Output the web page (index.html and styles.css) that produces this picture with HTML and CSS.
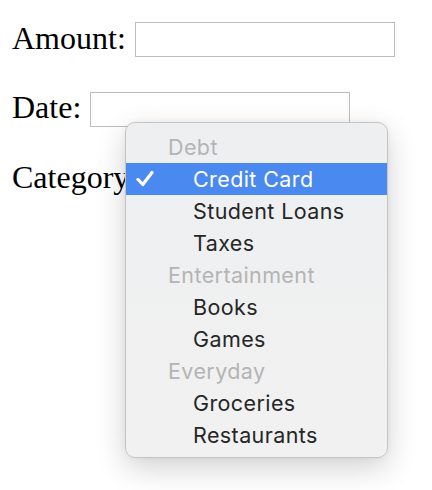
FILE: index.html
```html
<!DOCTYPE html>
<html>
<head>
<meta charset="utf-8">
<link rel="stylesheet" href="styles.css">
</head>
<body>
<div class="form">
  <div class="row">
    <span class="label">Amount:</span>
    <span class="field"></span>
  </div>
  <div class="row">
    <span class="label">Date:</span>
    <span class="field"></span>
  </div>
  <div class="row">
    <span class="label">Category:</span>
  </div>
</div>
<div class="menu">
  <div class="group">Debt</div>
  <div class="item selected">
    <svg class="check" viewBox="0 0 18 17" width="18" height="17"><path d="M2 9.5 L6.8 14.5 L16 2.5" fill="none" stroke="#fff" stroke-width="3.2" stroke-linecap="round" stroke-linejoin="round"/></svg>
    <span>Credit Card</span>
  </div>
  <div class="item"><span>Student Loans</span></div>
  <div class="item"><span>Taxes</span></div>
  <div class="group">Entertainment</div>
  <div class="item"><span>Books</span></div>
  <div class="item"><span>Games</span></div>
  <div class="group">Everyday</div>
  <div class="item"><span>Groceries</span></div>
  <div class="item"><span>Restaurants</span></div>
</div>
</body>
</html>
```
FILE: styles.css
```css
html, body {
  margin: 0;
  padding: 0;
  background: #ffffff;
}
body {
  width: 432px;
  height: 490px;
  overflow: hidden;
  position: relative;
  font-family: "Liberation Serif", "Times New Roman", serif;
  color: #000;
}
.form {
  padding: 22px 0 0 12px;
  display: flex;
  flex-direction: column;
  gap: 34.5px;
}
.row {
  display: flex;
  align-items: center;
  height: 35px;
  gap: 9px;
}
.label {
  font-size: 32px;
  line-height: 32px;
  margin-bottom: 4px;
  white-space: nowrap;
}
.field {
  display: block;
  width: 258px;
  height: 33px;
  border: 1px solid #bdbdbd;
  background: #fff;
}
.menu {
  position: absolute;
  left: 125px;
  top: 122px;
  width: 263px;
  height: 336px;
  box-sizing: border-box;
  padding: 8px 0;
  background: linear-gradient(#eeeff1, #f1f1f1);
  border: 1px solid #c4c4c4;
  border-radius: 10px;
  box-shadow: 0 10px 30px rgba(0,0,0,0.18), 0 0 6px rgba(0,0,0,0.05);
  font-family: Inter, "Noto Sans", sans-serif;
  font-size: 21.5px;
  letter-spacing: 0.4px;
  overflow: hidden;
}
.group, .item {
  height: 32px;
  display: flex;
  align-items: center;
  white-space: nowrap;
}
.group {
  padding-left: 42px;
  color: #b4b4b4;
}
.item {
  padding-left: 67px;
  color: #262626;
  position: relative;
}
.item.selected {
  background: #4a89ef;
  color: #fff;
}
.check {
  position: absolute;
  left: 10px;
  top: 7px;
}
```
